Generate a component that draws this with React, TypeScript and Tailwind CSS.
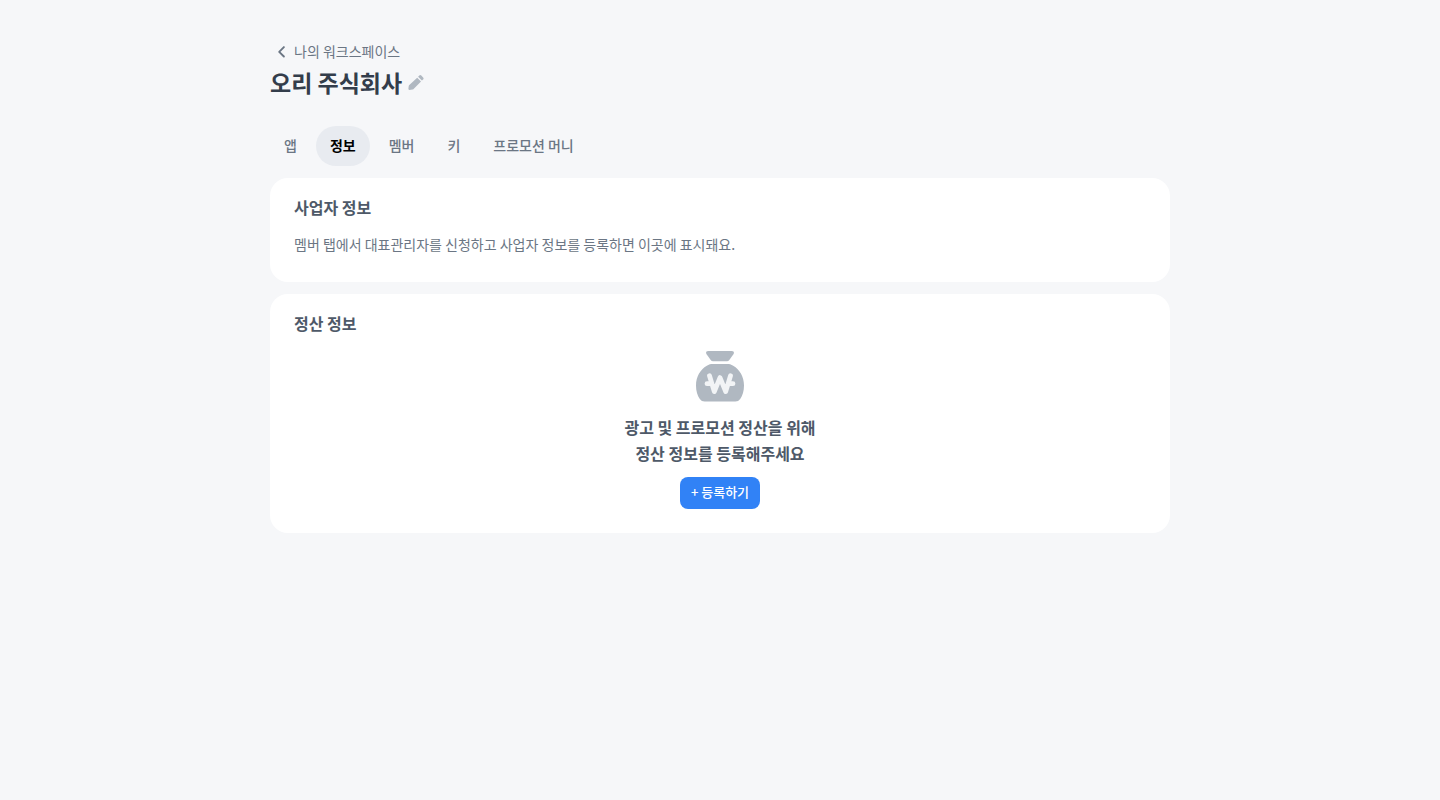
import type { ReactNode } from 'react';
import clsx from 'clsx';

interface InfoCardProps {
  title: string;
  children: ReactNode;
}

const tabs = ['앱', '정보', '멤버', '키', '프로모션 머니'];

function ChevronLeftIcon() {
  return (
    <svg viewBox="0 0 24 24" className="w-6 h-6 shrink-0" fill="none" aria-hidden="true">
      <path d="M13.9 8.1L9.2 12.8l4.7 4.7" stroke="#6b7684" strokeWidth="1.9" strokeLinecap="round" strokeLinejoin="round" />
    </svg>
  );
}

function PencilIcon() {
  return (
    <svg viewBox="0 0 16 16" className="w-4 h-4" fill="#b0b8c1" aria-hidden="true">
      <path d="M9.2 3.7L13 7.5 5.6 14.9Q5.1 15.4 4.4 15.5L1.5 15.9Q0.3 16 0.4 14.8L0.7 12.2Q0.8 11.5 1.3 11.1Z" />
      <path d="M10.1 2.8L11.3 1.6Q12.3 0.6 13.3 1.6L15.1 3.4Q16.1 4.4 15.1 5.4L13.9 6.6Z" />
    </svg>
  );
}

function MoneyBagIcon() {
  return (
    <svg viewBox="0 0 60 60" className="w-[60px] h-[60px]" aria-hidden="true">
      <path
        d="M18.5 5H41.5Q44.9 5 43.6 8L39.3 14Q38.4 15.2 37 15.2H23Q21.6 15.2 20.7 14L16.4 8Q15.1 5 18.5 5Z"
        fill="#b0b8c1"
      />
      <path
        d="M23 18.1H37C39.2 18.1 41.2 18.5 43.2 19.8C49.8 23.6 54 31 54 39.4C54 44.8 52.6 49.4 50.2 52.9Q48.4 55.4 45.4 55.4H14.6Q11.6 55.4 9.8 52.9C7.4 49.4 6 44.8 6 39.4C6 31 10.2 23.6 16.8 19.8C18.8 18.5 20.8 18.1 23 18.1Z"
        fill="#b0b8c1"
      />
      <path
        d="M19.5 29.8L24.3 45.6L30 31.6L35.7 45.6L40.5 29.8M17 37.7H22M38 37.7H43"
        fill="none"
        stroke="#f2f4f6"
        strokeWidth="4.8"
        strokeLinecap="round"
        strokeLinejoin="round"
      />
    </svg>
  );
}

function InfoCard({ title, children }: InfoCardProps) {
  return (
    <section className="bg-white rounded-[18px] px-6 pt-4 pb-6">
      <h2 className="text-base leading-[26px] font-semibold text-[#4e5968]">{title}</h2>
      {children}
    </section>
  );
}

export default function App() {
  return (
    <div className="min-h-screen bg-[#f6f7f9] font-['Noto_Sans_CJK_KR',sans-serif] text-[#6b7684]">
      <main className="mx-auto max-w-[900px] pt-[39px] pb-10">
        <header>
          <a href="#" className="inline-flex items-center align-top text-sm leading-6">
            <ChevronLeftIcon />
            나의 워크스페이스
          </a>
          <div className="flex items-center gap-[6px]">
            <h1 className="text-[23px] leading-[38px] font-bold text-[#333d4b]">오리 주식회사</h1>
            <button type="button" aria-label="이름 수정">
              <PencilIcon />
            </button>
          </div>
        </header>

        <nav className="flex gap-[5px] mt-[25px]">
          {tabs.map((tab) => (
            <button
              key={tab}
              type="button"
              className={clsx(
                'h-10 px-[14px] pb-[2px] rounded-full text-sm',
                tab === '정보' ? 'bg-[#e8ebf0] font-bold text-black' : 'font-medium'
              )}
            >
              {tab}
            </button>
          ))}
        </nav>

        <div className="flex flex-col gap-3 mt-3">
          <InfoCard title="사업자 정보">
            <p className="mt-3 pb-[2px] text-sm leading-6">
              멤버 탭에서 대표관리자를 신청하고 사업자 정보를 등록하면 이곳에 표시돼요.
            </p>
          </InfoCard>

          <InfoCard title="정산 정보">
            <div className="flex flex-col items-center mt-[10px]">
              <MoneyBagIcon />
              <p className="mt-2 text-center text-base leading-[26px] font-semibold text-[#4e5968]">
                광고 및 프로모션 정산을 위해
                <br />
                정산 정보를 등록해주세요
              </p>
              <button
                type="button"
                className="h-8 mt-[11px] px-[11px] pb-[2px] rounded-lg bg-[#3182f6] text-[13px] font-medium text-white"
              >
                + 등록하기
              </button>
            </div>
          </InfoCard>
        </div>
      </main>
    </div>
  );
}
